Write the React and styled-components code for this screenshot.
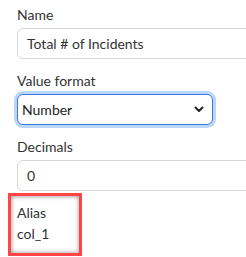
import React from 'react';
import styled, { createGlobalStyle } from 'styled-components';

const GlobalStyle = createGlobalStyle`
  body {
    margin: 0;
    padding: 0;
    background: #fff;
    font-family: 'Lato', 'Liberation Sans', sans-serif;
    overflow: hidden;
  }

  *, *::before, *::after {
    box-sizing: border-box;
  }
`;

const Panel = styled.div`
  padding: 5px 0 0 17px;
  width: 246px;
  height: 257px;
  overflow: hidden;
`;

const Field = styled.div`
  margin-bottom: ${(p) => (p.$last ? '0' : '12px')};
`;

const Label = styled.label`
  display: block;
  font-size: 14px;
  line-height: 20px;
  color: #333;
  margin-bottom: 3px;
`;

const TextInput = styled.input`
  display: block;
  width: 260px;
  height: 31px;
  padding: 0 9px;
  font-family: inherit;
  font-size: 14px;
  color: #333;
  border: 1px solid #d8d8d8;
  border-radius: 6px;
  background: #fff;
  outline: none;
`;

const SelectWrap = styled.div`
  position: relative;
  width: 196px;
`;

const Select = styled.select`
  display: block;
  width: 196px;
  height: 31px;
  padding: 0 4px;
  font-family: inherit;
  font-size: 14px;
  color: #222;
  border: 1.5px solid #3d78dd;
  border-radius: 6px;
  background: #fff;
  box-shadow: 0 0 0 3px #bcd5fa;
  appearance: none;
  outline: none;
`;

const Chevron = styled.svg`
  position: absolute;
  right: 9px;
  top: 12px;
  pointer-events: none;
`;

// red highlight drawn over the Alias field
const Annotation = styled.div`
  margin: 2px 0 0 -9px;
  width: 74px;
  height: 63px;
  border: 3px solid #ff4545;
  padding: 6px 0 0 6px;
  box-shadow: inset 1px 1px 4px rgba(0, 0, 0, 0.28), inset -1px -1px 4px rgba(0, 0, 0, 0.2);
`;

const AliasLine = styled.div`
  font-size: 14px;
  line-height: 21px;
  color: #333;
`;

export default function App() {
  return (
    <>
      <GlobalStyle />
      <Panel>
        <Field>
          <Label>Name</Label>
          <TextInput defaultValue="Total # of Incidents" />
        </Field>
        <Field>
          <Label>Value format</Label>
          <SelectWrap>
            <Select defaultValue="number">
              <option value="number">Number</option>
            </Select>
            <Chevron width="10" height="7" viewBox="0 0 10 7">
              <path d="M1.5 1.5 L5 5 L8.5 1.5" fill="none" stroke="#222" strokeWidth="2" strokeLinecap="round" strokeLinejoin="round" />
            </Chevron>
          </SelectWrap>
        </Field>
        <Field $last>
          <Label>Decimals</Label>
          <TextInput defaultValue="0" />
        </Field>
        <Annotation>
          <AliasLine>Alias</AliasLine>
          <AliasLine>col_1</AliasLine>
        </Annotation>
      </Panel>
    </>
  );
}
